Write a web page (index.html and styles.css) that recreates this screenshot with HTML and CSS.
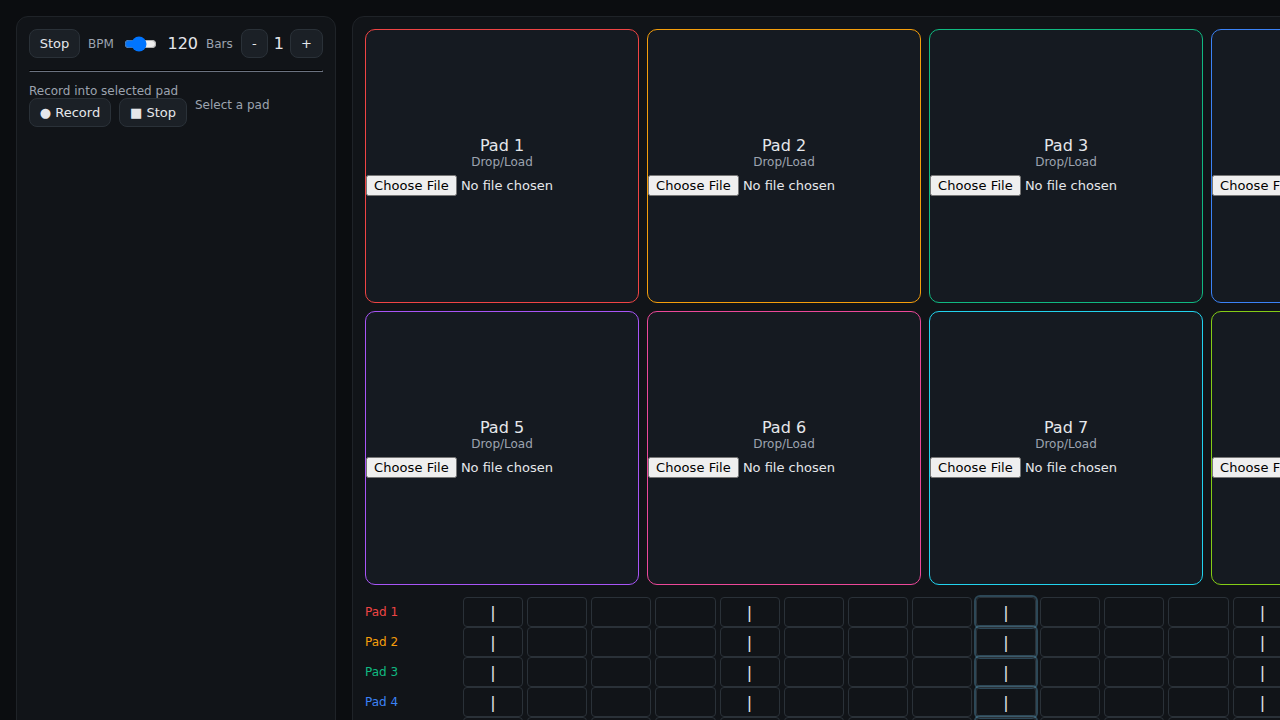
FILE: index.html
```html
<!DOCTYPE html>
<html lang="en">
<head>
<meta charset="utf-8">
<title>Loop Pads</title>
<link rel="stylesheet" href="styles.css">
</head>
<body>
<div class="app">
  <aside class="panel side">
    <div class="row transport">
      <button class="btn btn-play">Stop</button>
      <span class="small">BPM</span>
      <input class="tempo" type="range" min="60" max="200" value="120">
      <span class="bpm">120</span>
      <span class="small">Bars</span>
      <div class="bars"><button class="btn btn-minus">-</button><span>1</span><button class="btn btn-plus">+</button></div>
    </div>
    <hr class="rule">
    <div class="small">Record into selected pad</div>
    <div class="row recorder">
      <button class="btn btn-record">● Record</button>
      <button class="btn btn-halt">■ Stop</button>
      <div class="small">Select a pad</div>
    </div>
  </aside>
  <main class="panel main">
    <div class="pads" id="pads"></div>
    <div class="sequencer" id="sequencer"></div>
  </main>
</div>
<script src="app.js"></script>
</body>
</html>
```

FILE: styles.css
```css
* { box-sizing: border-box; }
html, body { height: 100%; }
body {
  margin: 0;
  overflow: hidden;
  background: #0b0d10;
  color: #e5e7eb;
  font: 16px "DejaVu Sans", sans-serif;
}
.app {
  display: grid;
  grid-template-columns: 320px 1146px;
  gap: 16px;
  padding: 16px;
}
.panel {
  min-height: 900px;
  padding: 12px;
  border: 1px solid #1f2328;
  border-radius: 12px;
  background: #111418;
}
.row { display: flex; gap: 8px; }
.transport { align-items: center; }
.bars { display: flex; align-items: center; gap: 6px; }
.btn {
  flex: none;
  height: 29px;
  padding: 6px 0;
  border: 1px solid #2a3138;
  border-radius: 8px;
  background: #1b2026;
  color: #e5e7eb;
  font-family: inherit;
  font-size: 13px;
  white-space: nowrap;
}
.btn-play { width: 51px; }
.btn-minus { width: 27px; }
.btn-plus { width: 33px; }
.btn-record { width: 82px; }
.btn-halt { width: 68px; }
.small { color: #9ca3af; font-size: 12px; line-height: 14px; }
.tempo { flex: 1; min-width: 0; }
.rule {
  margin: 12px 0;
  border: 1px solid;
  border-color: #000 #6b7280 #6b7280 #000;
}
.pads {
  display: grid;
  grid-template-columns: repeat(4, 274px);
  gap: 8px;
}
.pad {
  display: flex;
  flex-direction: column;
  align-items: center;
  justify-content: center;
  height: 274px;
  border: 1px solid;
  border-radius: 10px;
  background: #151a21;
}
.pad-name { color: #e5e7eb; line-height: 19px; }
.file {
  width: 100%;
  height: 21px;
  margin-top: 6px;
  color: #e5e7eb;
  font-family: inherit;
  font-size: 13px;
}
.file::file-selector-button { font: inherit; letter-spacing: .09px; }
.sequencer { margin-top: 12px; }
.track {
  display: grid;
  grid-template-columns: 90px 1fr;
  gap: 8px;
  align-items: center;
}
.track-name { font-size: 12px; }
.steps {
  display: grid;
  grid-template-columns: repeat(16, 1fr);
  gap: 4px;
}
.step {
  display: flex;
  align-items: center;
  justify-content: center;
  height: 30px;
  border: 1px solid #2a3138;
  border-radius: 4px;
}
.step.current { box-shadow: 0 0 0 2px rgba(96, 165, 200, .36); }
.c1 { border-color: #ef4444; color: #ef4444; }
.c2 { border-color: #f59e0b; color: #f59e0b; }
.c3 { border-color: #10b981; color: #10b981; }
.c4 { border-color: #3b82f6; color: #3b82f6; }
.c5 { border-color: #a855f7; color: #a855f7; }
.c6 { border-color: #ec4899; color: #ec4899; }
.c7 { border-color: #22d3ee; color: #22d3ee; }
.c8 { border-color: #84cc16; color: #84cc16; }
```

FILE: app.js
```js
const pads = document.getElementById('pads');
const sequencer = document.getElementById('sequencer');
const currentStep = 8;

for (let n = 1; n <= 8; n++) {
  pads.insertAdjacentHTML('beforeend',
    `<div class="pad c${n}"><div class="pad-name">Pad ${n}</div>
     <div class="small">Drop/Load</div><input class="file" type="file"></div>`);

  let steps = '';
  for (let s = 0; s < 16; s++) {
    steps += `<div class="step${s === currentStep ? ' current' : ''}">${s % 4 === 0 ? '|' : ''}</div>`;
  }
  sequencer.insertAdjacentHTML('beforeend',
    `<div class="track"><div class="track-name c${n}">Pad ${n}</div><div class="steps">${steps}</div></div>`);
}
```
